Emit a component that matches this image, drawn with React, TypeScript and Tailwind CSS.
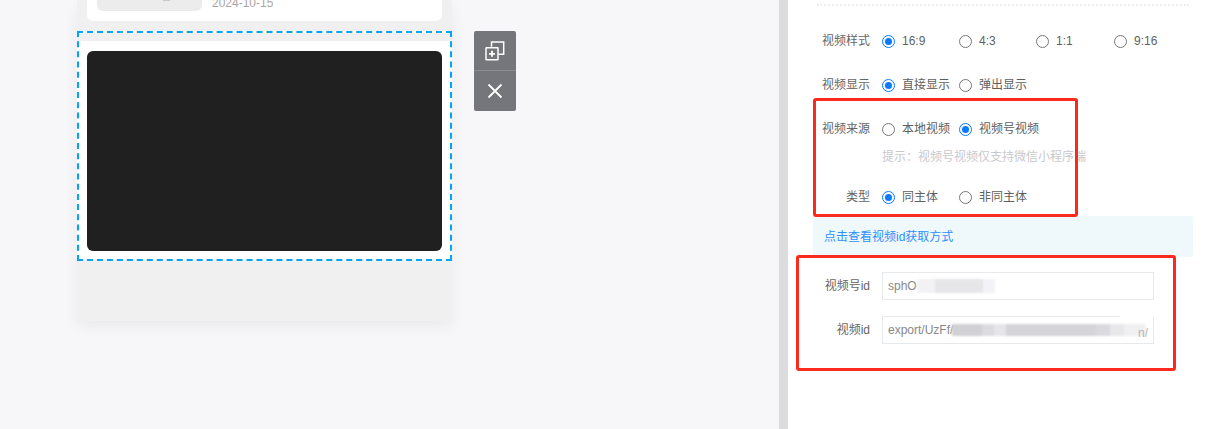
const fontStack = '"Liberation Sans", "Noto Sans CJK SC", sans-serif';

function Radio({ label, checked, wide }: { label: string; checked?: boolean; wide?: boolean }) {
  return (
    <label className={`flex items-center gap-[7px] ${wide ? "w-[78px]" : "w-[77px]"}`}>
      <span
        className={`flex h-[13px] w-[13px] shrink-0 items-center justify-center rounded-full border bg-white ${
          checked ? "border-[#0a7aff]" : "border-[#777777]"
        }`}
      >
        {checked && <span className="h-[7px] w-[7px] rounded-full bg-[#0a7aff]" />}
      </span>
      <span className="whitespace-nowrap text-[12px] text-[#5f5f5f]">{label}</span>
    </label>
  );
}

function FormRow({ label, className, children }: { label: string; className?: string; children: React.ReactNode }) {
  return (
    <div className={`flex h-5 items-center ${className ?? ""}`}>
      <span className="w-[82px] shrink-0 text-right text-[12px] text-[#666666]">{label}</span>
      <div className="ml-3 flex items-center">{children}</div>
    </div>
  );
}

function CopyPlusIcon() {
  return (
    <svg width="20" height="20" viewBox="0 0 20 20" fill="none" stroke="white" strokeWidth="1.5">
      <path d="M6.5 5.8V1h12.2v12.2H13.6" />
      <rect x="1" y="6.8" width="12" height="12" rx="0.5" />
      <path d="M4 12.8h6M7 9.8v6" strokeWidth="1.8" />
    </svg>
  );
}

function CloseIcon() {
  return (
    <svg width="16" height="16" viewBox="0 0 16 16" fill="none" stroke="white" strokeWidth="1.8">
      <path d="M1.5 1.5l13 13M14.5 1.5l-13 13" />
    </svg>
  );
}

export default function App() {
  return (
    <div className="flex h-[429px] w-[1208px] overflow-hidden bg-white" style={{ fontFamily: fontStack }}>
      {/* Canvas */}
      <div className="flex h-full w-[779px] shrink-0 items-start bg-[#f7f7f9] pl-[77px]">
        <div className="h-[321px] w-[375px] shrink-0 overflow-hidden bg-[#f0f0f0] shadow-[0_6px_14px_rgba(0,0,0,0.05)]">
          {/* Article card, cut off by the top of the page */}
          <div className="mx-[10px] h-[21px] overflow-hidden rounded-b-[6px] bg-white">
            <div className="flex h-[11px] items-end pl-[10px]">
              <div className="relative h-[11px] w-[105px] shrink-0 rounded-b-[6px] bg-[#ececec]">
                <span className="absolute left-[66px] top-0 h-[1px] w-[7px] bg-[#c9c9c9]" />
              </div>
              <div className="ml-[10px] h-[11px] overflow-hidden">
                <div className="-mt-[4px] text-[12px] leading-[14px] text-[#aaa6a2]">2024-10-15</div>
              </div>
            </div>
          </div>
          {/* Selected video block */}
          <div className="mt-[10px] h-[230px] border-2 border-dashed border-[#03a5ee] bg-[linear-gradient(#f0f0f0_8px,#ffffff_8px)] px-[8px] pt-[18px]">
            <div className="h-[200px] rounded-[6px] bg-[#202020]" />
          </div>
        </div>
        {/* Block actions */}
        <div className="ml-[22px] mt-[31px] flex w-[42px] shrink-0 flex-col overflow-hidden rounded-[2px] bg-[#75767c]">
          <button className="flex h-[40px] items-center justify-center border-b border-[#8c8d92] pt-[1px]">
            <CopyPlusIcon />
          </button>
          <button className="flex h-[40px] items-center justify-center">
            <CloseIcon />
          </button>
        </div>
      </div>

      {/* Divider */}
      <div className="h-full w-[9px] shrink-0 bg-[#dcdcdc]" />

      {/* Settings panel */}
      <div className="relative h-full flex-1 bg-white pt-[4px]">
        <div className="ml-[29px] w-[372px] border-t-2 border-dotted border-[#eeeeee]" />
        <FormRow label="视频样式" className="mt-[25px]">
          <Radio label="16:9" checked />
          <Radio label="4:3" />
          <Radio label="1:1" wide />
          <Radio label="9:16" />
        </FormRow>
        <FormRow label="视频显示" className="mt-[24px]">
          <Radio label="直接显示" checked />
          <Radio label="弹出显示" />
        </FormRow>
        <FormRow label="视频来源" className="mt-[24px]">
          <Radio label="本地视频" />
          <Radio label="视频号视频" checked />
        </FormRow>
        <p className="ml-[94px] mt-[9px] text-[12px] leading-[18px] text-[#c9c9cd]">提示：视频号视频仅支持微信小程序端</p>
        <FormRow label="类型" className="mt-[21px]">
          <Radio label="同主体" checked />
          <Radio label="非同主体" />
        </FormRow>
        <div className="ml-[25px] mt-[9px] flex h-[41px] w-[380px] items-center rounded-[2px] bg-[#eff8fa] pl-[11px] text-[12px] text-[#2f8fff]">
          点击查看视频id获取方式
        </div>

        <div className="mt-[15px] flex h-7 items-center">
          <span className="w-[82px] shrink-0 text-right text-[12px] text-[#666666]">视频号id</span>
          <div className="relative ml-3 flex h-7 w-[272px] items-center border border-[#e5e9eb] px-[5px] text-[12px] text-[#888888]">
            sphO
            <div className="absolute left-[34px] top-[6px] flex h-[14px] blur-[1px]">
              <span className="h-full w-[18px] bg-[#f2f2f4]" />
              <span className="h-full w-[48px] bg-[#e6e6e8]" />
              <span className="h-full w-[12px] bg-[#f3f3f7]" />
            </div>
          </div>
        </div>
        <div className="mt-4 flex h-7 items-center">
          <span className="w-[82px] shrink-0 text-right text-[12px] text-[#666666]">视频id</span>
          <div className="relative ml-3 flex h-7 w-[272px] items-center overflow-hidden border border-[#e5e9eb] px-[5px] text-[12px] text-[#888888]">
            export/UzFf/
            <div className="absolute left-[69px] top-[7px] flex h-[12px] blur-[1px]">
              <span className="h-full w-[30px] bg-[#d0d0d5]" />
              <span className="h-full w-[12px] bg-[#dcdce0]" />
              <span className="h-full w-[12px] bg-[#e6e6e8]" />
              <span className="h-full w-[90px] bg-[#d4d4d9]" />
              <span className="h-full w-[14px] bg-[#dadade]" />
              <span className="h-full w-[14px] bg-[#e8e8ea]" />
              <span className="h-full w-[22px] bg-[#f0f0f2]" />
            </div>
            <span className="absolute right-[5px] top-[7px] text-[#b5b5b8]">n/</span>
          </div>
        </div>
        <span className="absolute left-[332px] top-[314px] h-[4px] w-[34px] bg-white blur-[1px]" />

        {/* Red annotation frames */}
        <div className="absolute left-[25px] top-[98px] h-[119px] w-[265px] rounded-[3px] border-[3px] border-[#fb2a1c]" />
        <div className="absolute left-[8px] top-[255px] h-[116px] w-[380px] rounded-[3px] border-[3px] border-[#fb2a1c]" />
      </div>
    </div>
  );
}
